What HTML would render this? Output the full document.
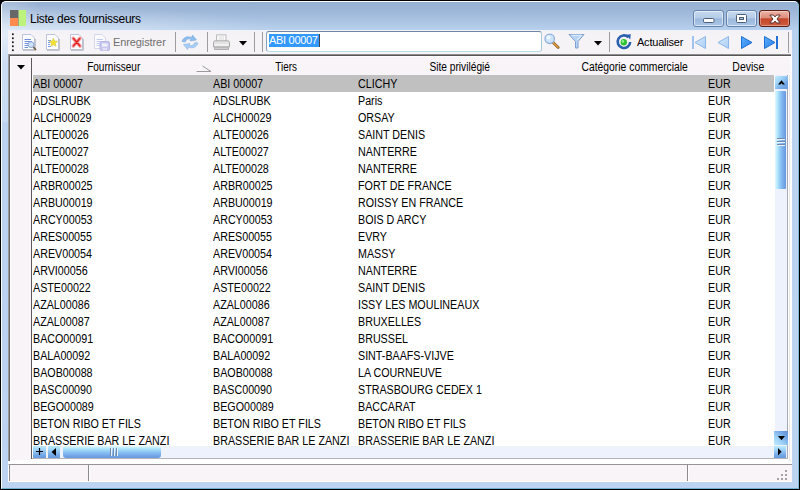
<!DOCTYPE html>
<html lang="fr"><head><meta charset="utf-8"><title>Liste des fournisseurs</title>
<style>
html,body{margin:0;padding:0;background:#000;}
body{width:800px;height:490px;overflow:hidden;position:relative;font-family:"Liberation Sans",sans-serif;font-size:11px;color:#000;}
*{box-sizing:border-box;}
.abs{position:absolute;}
#win{position:absolute;left:0;top:0;width:800px;height:490px;border:1px solid #000;border-radius:6px 6px 0 0;overflow:hidden;
 background:linear-gradient(to bottom,#96b0d2 0px,#9bb5d6 8px,#a8c1e1 18px,#b7d0ec 29px,#bbd3f1 60px,#bcd4f2 100%);}
#win:before{content:"";position:absolute;left:0;top:0;right:0;bottom:0;border:1px solid;border-color:#fff #7fbad3 #6fb2cc #fff;border-radius:5px 5px 0 0;pointer-events:none;z-index:5;}
#lglow{left:1px;top:1px;width:320px;height:120px;background:radial-gradient(ellipse 290px 30px at 0 32px,rgba(255,255,255,.5),rgba(255,255,255,.25) 50%,rgba(255,255,255,0)),radial-gradient(ellipse 40px 200px at 0 60px,rgba(255,255,255,.25),rgba(255,255,255,0));}
#title{left:29px;top:10px;height:16px;line-height:16px;font-size:12px;letter-spacing:-.27px;color:#000;white-space:nowrap;}
#appico{left:9px;top:9px;width:16px;height:16px;}
/* caption buttons */
.cb{top:9px;height:17px;border:1px solid #6683ab;border-radius:3px;background:linear-gradient(to bottom,#c7d9ef 0,#b4cbe8 48%,#9bb8dc 52%,#aac6e8 100%);box-shadow:inset 0 0 0 1px rgba(255,255,255,.55);}
#bclose{border-color:#5b1d16;background:linear-gradient(to bottom,#ecb3a5 0,#dd8f7d 45%,#c4472b 52%,#cf5c3e 100%);box-shadow:inset 0 0 0 1px rgba(255,255,255,.35);}
/* client */
#client{left:7px;top:29px;width:784px;height:452px;background:linear-gradient(to bottom,#f1f1f8 0,#f6f3f6 5px,#f6f3f6 100%);}
.sep{width:1px;top:2px;height:20px;background:#9d9d9d;}
.tbtxt{top:5px;height:14px;line-height:14px;white-space:nowrap;}
#input{left:258px;top:1px;width:276px;height:21px;border:1px solid;border-color:#6d86a3 #a9c6da #b9dbe8 #8aa3bd;border-radius:3px;background:#fff;}
#seltxt{left:2px;top:2px;width:50px;height:13px;line-height:13px;background:#3399ff;color:#fff;padding:0;white-space:nowrap;}
/* grid : coordinates relative to grid box at abs (8,54) */
#grid{left:0;top:24px;width:784px;height:410px;background:#fff;overflow:hidden;}
#hdr{left:2px;top:2px;width:780px;height:19px;background:#f8f4f7;border-top:1px solid #fff;}
#rowhdr{left:2px;top:2px;width:21px;height:404px;background:#f8f4f7;border-left:1px solid #fff;border-top:1px solid #fff;}
#rowhdrline{left:23px;top:4px;width:1px;height:401px;background:#5a5a5a;}
.h{top:6px;height:14px;line-height:14px;text-align:center;white-space:nowrap;}
.h i,.c i{font-style:normal;display:inline-block;font-size:12px;}
.c i{transform-origin:0 50%;transform:scaleX(.893);}
.h i{transform-origin:50% 50%;}
#rows{left:25px;top:21px;width:741px;height:371px;overflow:hidden;}
.r{position:absolute;left:0;width:741px;height:17px;}
.r.sel{background:#c0c0c0;}
.c{position:absolute;top:0;height:19px;line-height:19px;white-space:nowrap;}
.c1{left:0px}.c2{left:180px}.c3{left:325px}.c5{left:675px}
/* scrollbars */
#vtrack{left:767px;top:21px;width:12px;height:371px;background:#eef2fc;}
.sb{background:linear-gradient(135deg,#c4ecfd 0,#9fd3f8 35%,#74a8e6 70%,#6a98dc 100%);}
#vup{left:767px;top:22px;width:13px;height:13px;}
#vdn{left:766px;top:377px;width:14px;height:13.5px;}
.sb2{background:linear-gradient(45deg,#c4ecfd 0,#9fd3f8 35%,#74a8e6 70%,#5f8cd0 100%);}
#vthumb{left:767px;top:37px;width:11px;height:98px;border-radius:1px;background:linear-gradient(to right,#e4f8ff 0,#b4e8fd 22%,#8cc4f4 50%,#6fa2e6 85%,#6a98dc 100%);}
#hbar{left:25px;top:392px;width:754px;height:12px;background:#eef2fc;}
.hb{top:0;width:13px;height:12px;background:linear-gradient(to bottom,#bdeafd 0,#9fd3f8 30%,#74a8e6 75%,#6a98dc 100%);}
#hthumb{left:30px;top:0;width:98px;height:12px;border-radius:3px;background:linear-gradient(to bottom,#e4f8ff 0,#b4e8fd 20%,#8cc4f4 50%,#6fa2e6 85%,#6a98dc 100%);}
/* status */
#status{left:0px;top:434px;width:784px;height:18px;background:#f8f4f7;border-top:1px solid #959394;border-bottom:1px solid #fff;border-left:1px solid #fff;}
.ss{top:0;width:2px;height:16px;border-left:1px solid #8c8a8b;border-right:1px solid #fff;}
</style></head>
<body>
<div id="win">
 <div id="lglow" class="abs"></div>
 <svg id="appico" class="abs" viewBox="0 0 16 16"><rect x="0" y="0" width="8" height="8" fill="#676767"/><rect x="0" y="8" width="8" height="8" fill="#ff8a4f"/><rect x="9" y="0" width="7" height="16" fill="#bdf27d"/><rect x="8" y="0" width="1" height="16" fill="#9aa884"/></svg>
 <div id="title" class="abs">Liste des fournisseurs</div>
 <!-- caption buttons -->
 <div class="abs cb" style="left:692px;width:31px;"><svg class="abs" style="left:9px;top:7px" width="12" height="6"><rect x=".5" y=".5" width="10.5" height="4" rx="1.2" fill="#fff" stroke="#4b5e78"/></svg></div>
 <div class="abs cb" style="left:725px;width:31px;"><svg class="abs" style="left:9px;top:3px" width="12" height="10"><rect x=".5" y=".5" width="10" height="8" rx="1" fill="#fff" stroke="#4b5e78"/><rect x="3.5" y="3.5" width="4" height="2" fill="#a9c1e0" stroke="#4b5e78"/></svg></div>
 <div class="abs cb" id="bclose" style="left:758px;width:31px;"><svg class="abs" style="left:9px;top:3px" width="12" height="10" viewBox="0 0 12 10"><path d="M.8 1 L4.3 1 L6 2.9 L7.7 1 L11.2 1 L8 5 L11.2 9 L7.7 9 L6 7.1 L4.3 9 L.8 9 L4 5 Z" fill="#fff" stroke="#5a3030" stroke-width="1"/></svg></div>

 <div id="client" class="abs">
  <!-- toolbar -->
  <svg class="abs" style="left:4px;top:3px" width="3" height="20"><g fill="#151515"><rect x="0" y=".4" width="1.7" height="1.7"/><rect x="0" y="4.4" width="1.7" height="1.7"/><rect x="0" y="8.4" width="1.7" height="1.7"/><rect x="0" y="12.4" width="1.7" height="1.7"/><rect x="0" y="16.4" width="1.7" height="1.7"/></g></svg>
  <!-- icon1: doc + magnifier -->
  <svg class="abs" style="left:13px;top:4px" width="17" height="17" viewBox="0 0 17 17"><path d="M1.5 .5 H10 L13.5 4 V15.5 H1.5 Z" fill="#fdfdff" stroke="#bcc3dc"/><path d="M2 16.3 H14.3 V5" fill="none" stroke="#b9b9c4"/><path d="M3.5 5.5 H10 M3.5 7.5 H11 M3.5 9.5 H9 M3.5 11.5 H8 M3.5 13.5 H7" stroke="#6f8fdc" stroke-width="1"/><circle cx="10" cy="10.6" r="2.9" fill="#cfe2fb" stroke="#8aa6d8"/><path d="M12.3 13 L15 16" stroke="#6b5a3a" stroke-width="1.6"/></svg>
  <!-- icon2: doc + star -->
  <svg class="abs" style="left:37px;top:4px" width="17" height="17" viewBox="0 0 17 17"><path d="M1.5 .5 H10 L13.5 4 V15.5 H1.5 Z" fill="#fdfdff" stroke="#bcc3dc"/><path d="M2 16.3 H14.3 V5" fill="none" stroke="#b9b9c4"/><path d="M3 6.5 H6 M3 8.5 H5 M3 10.5 H5 M3 12.5 H6" stroke="#7d9be0"/><path d="M8.4 4.3 L9.6 7.1 L12.6 7.3 L10.3 9.3 L11.0 12.3 L8.4 10.7 L5.8 12.3 L6.5 9.3 L4.2 7.3 L7.2 7.1 Z" fill="#f3e52e" stroke="#d8cc55" stroke-width=".8" stroke-linejoin="round"/></svg>
  <!-- icon3: doc + red X -->
  <svg class="abs" style="left:61px;top:4px" width="17" height="17" viewBox="0 0 17 17"><path d="M1.5 .5 H10 L13.5 4 V15.5 H1.5 Z" fill="#fdfdff" stroke="#bcc3dc"/><path d="M2 16.3 H14.3 V5" fill="none" stroke="#b9b9c4"/><path d="M4.3 4.3 L11 12 M11 4.3 L4.3 12" stroke="#f9c4c4" stroke-width="4" stroke-linecap="round"/><path d="M4.3 4.3 L11 12 M11 4.3 L4.3 12" stroke="#f08080" stroke-width="2.6" stroke-linecap="round"/><path d="M4.6 4.6 L10.7 11.7 M10.7 4.6 L4.6 11.7" stroke="#e31b1b" stroke-width="1.3" stroke-linecap="round"/></svg>
  <!-- icon4: save (disabled) -->
  <svg class="abs" style="left:85px;top:4px" width="18" height="18" viewBox="0 0 18 18"><path d="M1.500 .5 H9 L12.5 4 V14.500 H1.500 Z" fill="#fbfbff" stroke="#d4d8ea"/><path d="M3.500 5.500 H10 M3.500 7.500 H10 M3.500 9.500 H8 M3.500 11.500 H7" stroke="#c3cdf0"/><rect x="7" y="7.500" width="9.500" height="9" rx="1.500" fill="#c9c8ee" stroke="#b7b5e6"/><rect x="9" y="9.500" width="5.500" height="3" fill="#f1f1fc"/><rect x="9.500" y="14" width="4.500" height="2.500" fill="#e1e0f7"/></svg>
  <div class="abs tbtxt" style="left:105px;color:#6f6f6f;letter-spacing:-.1px">Enregistrer</div>
  <div class="abs sep" style="left:167px"></div>
  <!-- refresh (disabled look) -->
  <svg class="abs" style="left:173px;top:4px" width="18" height="17" viewBox="0 0 18 17"><path d="M1 7.500 C2 3.500 6.500 1.500 10.500 3.500 L11.500 1 L15.500 6 L9 7 L10 5.200 C7.500 4.200 5 5.500 4.200 8 Z" fill="#8dbcee" stroke="#7aa9de" stroke-width=".6"/><path d="M17 9 C16 13 11.500 15 7.500 13 L6.500 15.500 L2.500 10.500 L9 9.500 L8 11.300 C10.500 12.300 13 11 13.800 8.500 Z" fill="#a9cff4" stroke="#86b4e6" stroke-width=".6"/></svg>
  <div class="abs sep" style="left:199px"></div>
  <!-- printer -->
  <svg class="abs" style="left:204px;top:4px" width="19" height="17" viewBox="0 0 19 17"><path d="M4.500 7 V.8 H14 V7" fill="#fafafa" stroke="#b9b9b9"/><path d="M6.500 3 H12 M6.500 5 H12" stroke="#d9d9d9"/><path d="M1.500 8.500 Q1.500 6.800 3.200 6.800 H15.800 Q17.500 6.800 17.500 8.500 V13 H1.500 Z" fill="#e3e3e3" stroke="#a9a9a9"/><rect x="2.500" y="10.500" width="14" height="1" fill="#fff"/><path d="M2.500 13.200 H16.500 V15.500 H2.500 Z" fill="#cfcfcf" stroke="#aeaeae"/></svg>
  <svg class="abs" style="left:231px;top:11px" width="8" height="5"><path d="M0 0 H8 L4 4.500 Z" fill="#000"/></svg>
  <div class="abs sep" style="left:246px"></div>
  <div class="abs sep" style="left:254px"></div>
  <div id="input" class="abs"><div id="seltxt" class="abs"><i style="font-style:normal;letter-spacing:-.3px">ABI 00007</i></div><div class="abs" style="left:52px;top:2px;width:1px;height:13px;background:#444"></div></div>
  <!-- search icon -->
  <svg class="abs" style="left:535px;top:2px" width="18" height="18" viewBox="0 0 18 18"><path d="M9.800 10.300 L15.200 15.400" stroke="#8a5a1a" stroke-width="2.800" stroke-linecap="round"/><path d="M9.800 10.300 L15 15.200" stroke="#e4a045" stroke-width="1.300" stroke-linecap="round"/><circle cx="6.700" cy="6.800" r="4.700" fill="#cfe3fb" stroke="#8fb0dc" stroke-width="1.300"/><circle cx="5.500" cy="5.500" r="2" fill="#eef6ff"/></svg>
  <!-- funnel -->
  <svg class="abs" style="left:560px;top:3px" width="17" height="17" viewBox="0 0 17 17"><path d="M1 1.500 H16 L10 8.500 V15 H7.500 V8.500 Z" fill="#b9d5f6" stroke="#7f9fce" stroke-linejoin="round"/><path d="M3.500 2.200 H13.500 L9.300 7" fill="none" stroke="#e6f1fd"/></svg>
  <svg class="abs" style="left:586px;top:11px" width="8" height="5"><path d="M0 0 H8 L4 4.500 Z" fill="#000"/></svg>
  <div class="abs sep" style="left:601px"></div>
  <!-- actualiser icon -->
  <svg class="abs" style="left:607px;top:3px" width="18" height="18" viewBox="0 0 18 18"><path d="M13.300 4.200 A6.300 6.300 0 1 0 15.200 9" fill="none" stroke="#2b5fb0" stroke-width="2.600"/><path d="M10.800 1.800 L15.800 1.200 L15.200 6.600 Z" fill="#2b5fb0"/><circle cx="8.800" cy="9.300" r="3.200" fill="#2fc233"/><circle cx="7.900" cy="8.400" r="1.300" fill="#8ff08f"/></svg>
  <div class="abs tbtxt" style="left:629px;letter-spacing:-.22px">Actualiser</div>
  <!-- nav arrows -->
  <svg class="abs" style="left:683px;top:5px" width="16" height="15" viewBox="0 0 16 15"><defs><linearGradient id="gd" x1="0" y1="0" x2="1" y2="1"><stop offset="0" stop-color="#d9eafc"/><stop offset="1" stop-color="#a9cdf5"/></linearGradient><linearGradient id="ga" x1="0" y1="0" x2="1" y2="1"><stop offset="0" stop-color="#5aaefc"/><stop offset="1" stop-color="#2a7fe6"/></linearGradient></defs><rect x="1" y="1" width="2" height="13" fill="#9fc3ee"/><path d="M14.500 1.500 V13.500 L4 7.500 Z" fill="url(#gd)" stroke="#8db6e8"/></svg>
  <svg class="abs" style="left:708px;top:5px" width="14" height="15" viewBox="0 0 14 15"><path d="M12.500 1.500 V13.500 L2 7.500 Z" fill="url(#gd)" stroke="#8db6e8"/></svg>
  <svg class="abs" style="left:732px;top:5px" width="14" height="15" viewBox="0 0 14 15"><path d="M1.500 1.500 V13.500 L12 7.500 Z" fill="url(#ga)" stroke="#1f6fd4"/></svg>
  <svg class="abs" style="left:755px;top:5px" width="16" height="15" viewBox="0 0 16 15"><rect x="13" y="1" width="2" height="13" fill="#1f6fd4"/><path d="M1.500 1.500 V13.500 L12 7.500 Z" fill="url(#ga)" stroke="#1f6fd4"/></svg>
  <div class="abs sep" style="left:780px;top:2px;height:21px"></div>

  <!-- grid -->
  <div id="grid" class="abs">
   <div id="hdr" class="abs"></div>
   <div id="rowhdr" class="abs"></div>
   <div id="rowhdrline" class="abs"></div>
   <div class="abs h" style="left:24px;width:163px;"><i style="transform:scaleX(.838)">Fournisseur</i></div>
   <svg class="abs" style="left:188px;top:11px" width="16" height="8"><path d="M.5 6.500 L6.500 1" stroke="#fff" fill="none"/><path d="M6.500 1 L15 6.500 H.5" stroke="#9a9a9a" fill="none"/></svg>
   <div class="abs h" style="left:206px;width:145px;"><i style="transform:scaleX(.824)">Tiers</i></div>
   <div class="abs h" style="left:349px;width:205px;"><i style="transform:scaleX(.849)">Site privilégié</i></div>
   <div class="abs h" style="left:554px;width:145px;"><i style="transform:scaleX(.862)">Catégorie commerciale</i></div>
   <div class="abs h" style="left:700px;width:80px;"><i style="transform:scaleX(.872)">Devise</i></div>
   <svg class="abs" style="left:9px;top:11px" width="9" height="5"><path d="M0 0 H8 L4 4.500 Z" fill="#000"/></svg>
   <div id="rows" class="abs">
<div class="r sel" style="top:0px"><span class="c c1"><i>ABI 00007</i></span><span class="c c2"><i>ABI 00007</i></span><span class="c c3"><i>CLICHY</i></span><span class="c c5"><i>EUR</i></span></div>
<div class="r" style="top:17px"><span class="c c1"><i>ADSLRUBK</i></span><span class="c c2"><i>ADSLRUBK</i></span><span class="c c3"><i>Paris</i></span><span class="c c5"><i>EUR</i></span></div>
<div class="r" style="top:34px"><span class="c c1"><i>ALCH00029</i></span><span class="c c2"><i>ALCH00029</i></span><span class="c c3"><i>ORSAY</i></span><span class="c c5"><i>EUR</i></span></div>
<div class="r" style="top:51px"><span class="c c1"><i>ALTE00026</i></span><span class="c c2"><i>ALTE00026</i></span><span class="c c3"><i>SAINT DENIS</i></span><span class="c c5"><i>EUR</i></span></div>
<div class="r" style="top:68px"><span class="c c1"><i>ALTE00027</i></span><span class="c c2"><i>ALTE00027</i></span><span class="c c3"><i>NANTERRE</i></span><span class="c c5"><i>EUR</i></span></div>
<div class="r" style="top:85px"><span class="c c1"><i>ALTE00028</i></span><span class="c c2"><i>ALTE00028</i></span><span class="c c3"><i>NANTERRE</i></span><span class="c c5"><i>EUR</i></span></div>
<div class="r" style="top:102px"><span class="c c1"><i>ARBR00025</i></span><span class="c c2"><i>ARBR00025</i></span><span class="c c3"><i>FORT DE FRANCE</i></span><span class="c c5"><i>EUR</i></span></div>
<div class="r" style="top:119px"><span class="c c1"><i>ARBU00019</i></span><span class="c c2"><i>ARBU00019</i></span><span class="c c3"><i>ROISSY EN FRANCE</i></span><span class="c c5"><i>EUR</i></span></div>
<div class="r" style="top:136px"><span class="c c1"><i>ARCY00053</i></span><span class="c c2"><i>ARCY00053</i></span><span class="c c3"><i>BOIS D ARCY</i></span><span class="c c5"><i>EUR</i></span></div>
<div class="r" style="top:153px"><span class="c c1"><i>ARES00055</i></span><span class="c c2"><i>ARES00055</i></span><span class="c c3"><i>EVRY</i></span><span class="c c5"><i>EUR</i></span></div>
<div class="r" style="top:170px"><span class="c c1"><i>AREV00054</i></span><span class="c c2"><i>AREV00054</i></span><span class="c c3"><i>MASSY</i></span><span class="c c5"><i>EUR</i></span></div>
<div class="r" style="top:187px"><span class="c c1"><i>ARVI00056</i></span><span class="c c2"><i>ARVI00056</i></span><span class="c c3"><i>NANTERRE</i></span><span class="c c5"><i>EUR</i></span></div>
<div class="r" style="top:204px"><span class="c c1"><i>ASTE00022</i></span><span class="c c2"><i>ASTE00022</i></span><span class="c c3"><i>SAINT DENIS</i></span><span class="c c5"><i>EUR</i></span></div>
<div class="r" style="top:221px"><span class="c c1"><i>AZAL00086</i></span><span class="c c2"><i>AZAL00086</i></span><span class="c c3"><i>ISSY LES MOULINEAUX</i></span><span class="c c5"><i>EUR</i></span></div>
<div class="r" style="top:238px"><span class="c c1"><i>AZAL00087</i></span><span class="c c2"><i>AZAL00087</i></span><span class="c c3"><i>BRUXELLES</i></span><span class="c c5"><i>EUR</i></span></div>
<div class="r" style="top:255px"><span class="c c1"><i>BACO00091</i></span><span class="c c2"><i>BACO00091</i></span><span class="c c3"><i>BRUSSEL</i></span><span class="c c5"><i>EUR</i></span></div>
<div class="r" style="top:272px"><span class="c c1"><i>BALA00092</i></span><span class="c c2"><i>BALA00092</i></span><span class="c c3"><i>SINT-BAAFS-VIJVE</i></span><span class="c c5"><i>EUR</i></span></div>
<div class="r" style="top:289px"><span class="c c1"><i>BAOB00088</i></span><span class="c c2"><i>BAOB00088</i></span><span class="c c3"><i>LA COURNEUVE</i></span><span class="c c5"><i>EUR</i></span></div>
<div class="r" style="top:306px"><span class="c c1"><i>BASC00090</i></span><span class="c c2"><i>BASC00090</i></span><span class="c c3"><i>STRASBOURG CEDEX 1</i></span><span class="c c5"><i>EUR</i></span></div>
<div class="r" style="top:323px"><span class="c c1"><i>BEGO00089</i></span><span class="c c2"><i>BEGO00089</i></span><span class="c c3"><i>BACCARAT</i></span><span class="c c5"><i>EUR</i></span></div>
<div class="r" style="top:340px"><span class="c c1"><i>BETON RIBO ET FILS</i></span><span class="c c2"><i>BETON RIBO ET FILS</i></span><span class="c c3"><i>BETON RIBO ET FILS</i></span><span class="c c5"><i>EUR</i></span></div>
<div class="r" style="top:357px"><span class="c c1"><i>BRASSERIE BAR LE ZANZI</i></span><span class="c c2"><i>BRASSERIE BAR LE ZANZI</i></span><span class="c c3"><i>BRASSERIE BAR LE ZANZI</i></span><span class="c c5"><i>EUR</i></span></div>
   </div>
   <!-- vertical scrollbar -->
   <div id="vtrack" class="abs"></div>
   <div class="abs" style="left:779px;top:21px;width:1px;height:384px;background:#a6a9b4"></div>
   <div class="abs" style="left:781px;top:21px;width:1px;height:386px;background:#ebe7e9"></div>
   <div id="vup" class="abs sb"><svg class="abs" style="left:3px;top:3.6px" width="8" height="5"><path d="M0 4.5 L3.5 .2 L7 4.5 H4.6 L3.5 3.3 L2.4 4.5 Z" fill="#000"/></svg></div>
   <div id="vthumb" class="abs"><svg class="abs" style="left:2px;top:47px" width="8" height="9"><path d="M0 1.5 H8 M0 4.5 H8 M0 7.5 H8" stroke="#e6f4ff"/><path d="M0 .5 H8 M0 3.5 H8 M0 6.5 H8" stroke="#7487ad"/></svg></div>
   <div id="vdn" class="abs sb2"><svg class="abs" style="left:4px;top:5px" width="8" height="5"><path d="M0 0 H7 L3.5 4.2 Z" fill="#000"/></svg></div>
   <!-- horizontal scrollbar -->
   <div id="hbar" class="abs">
    <div class="abs hb" style="left:0"><svg class="abs" style="left:3px;top:2px" width="8" height="8"><path d="M3.500 0 V7 M0 3.500 H7" stroke="#000" stroke-width="1.200"/></svg></div>
    <div class="abs hb" style="left:15px;width:12px"><svg class="abs" style="left:3px;top:2px" width="6" height="9"><path d="M5 0 V8 L.5 4 Z" fill="#000"/></svg></div>
    <div id="hthumb" class="abs"><svg class="abs" style="left:47px;top:2px" width="9" height="8"><path d="M1.5 0 V8 M4.5 0 V8 M7.5 0 V8" stroke="#e6f4ff"/><path d="M.5 0 V8 M3.5 0 V8 M6.5 0 V8" stroke="#7487ad"/></svg></div>
    <div class="abs hb" style="left:741px;width:12px"><svg class="abs" style="left:4px;top:1.6px" width="5" height="9"><path d="M0 0 V7.6 L3.6 3.8 Z" fill="#000"/></svg></div>
   </div>
   <div class="abs" style="left:24px;top:404px;width:756px;height:1px;background:#b3b3b8"></div>
   <!-- sunken border -->
   <div class="abs" style="left:0;top:0;width:783px;height:1px;background:#8e8e8e"></div>
   <div class="abs" style="left:1px;top:1px;width:782px;height:1px;background:#565656"></div>
   <div class="abs" style="left:0;top:0;width:1px;height:407px;background:#9a9a9a"></div>
   <div class="abs" style="left:1px;top:1px;width:1px;height:406px;background:#696969"></div>
  </div>

  <!-- status bar -->
  <div id="status" class="abs">
   <div class="abs" style="left:0;top:0;width:1px;height:16px;background:#8c8a8b"></div>
   <div class="abs ss" style="left:79px"></div>
   <div class="abs ss" style="left:678px"></div>
   <svg class="abs" style="left:768px;top:5px" width="11" height="11"><g fill="#a3a3a3"><rect x="8" y="0" width="2" height="2"/><rect x="4" y="4" width="2" height="2"/><rect x="8" y="4" width="2" height="2"/><rect x="0" y="8" width="2" height="2"/><rect x="4" y="8" width="2" height="2"/><rect x="8" y="8" width="2" height="2"/></g></svg>
  </div>
 </div>
</div>
</body></html>
